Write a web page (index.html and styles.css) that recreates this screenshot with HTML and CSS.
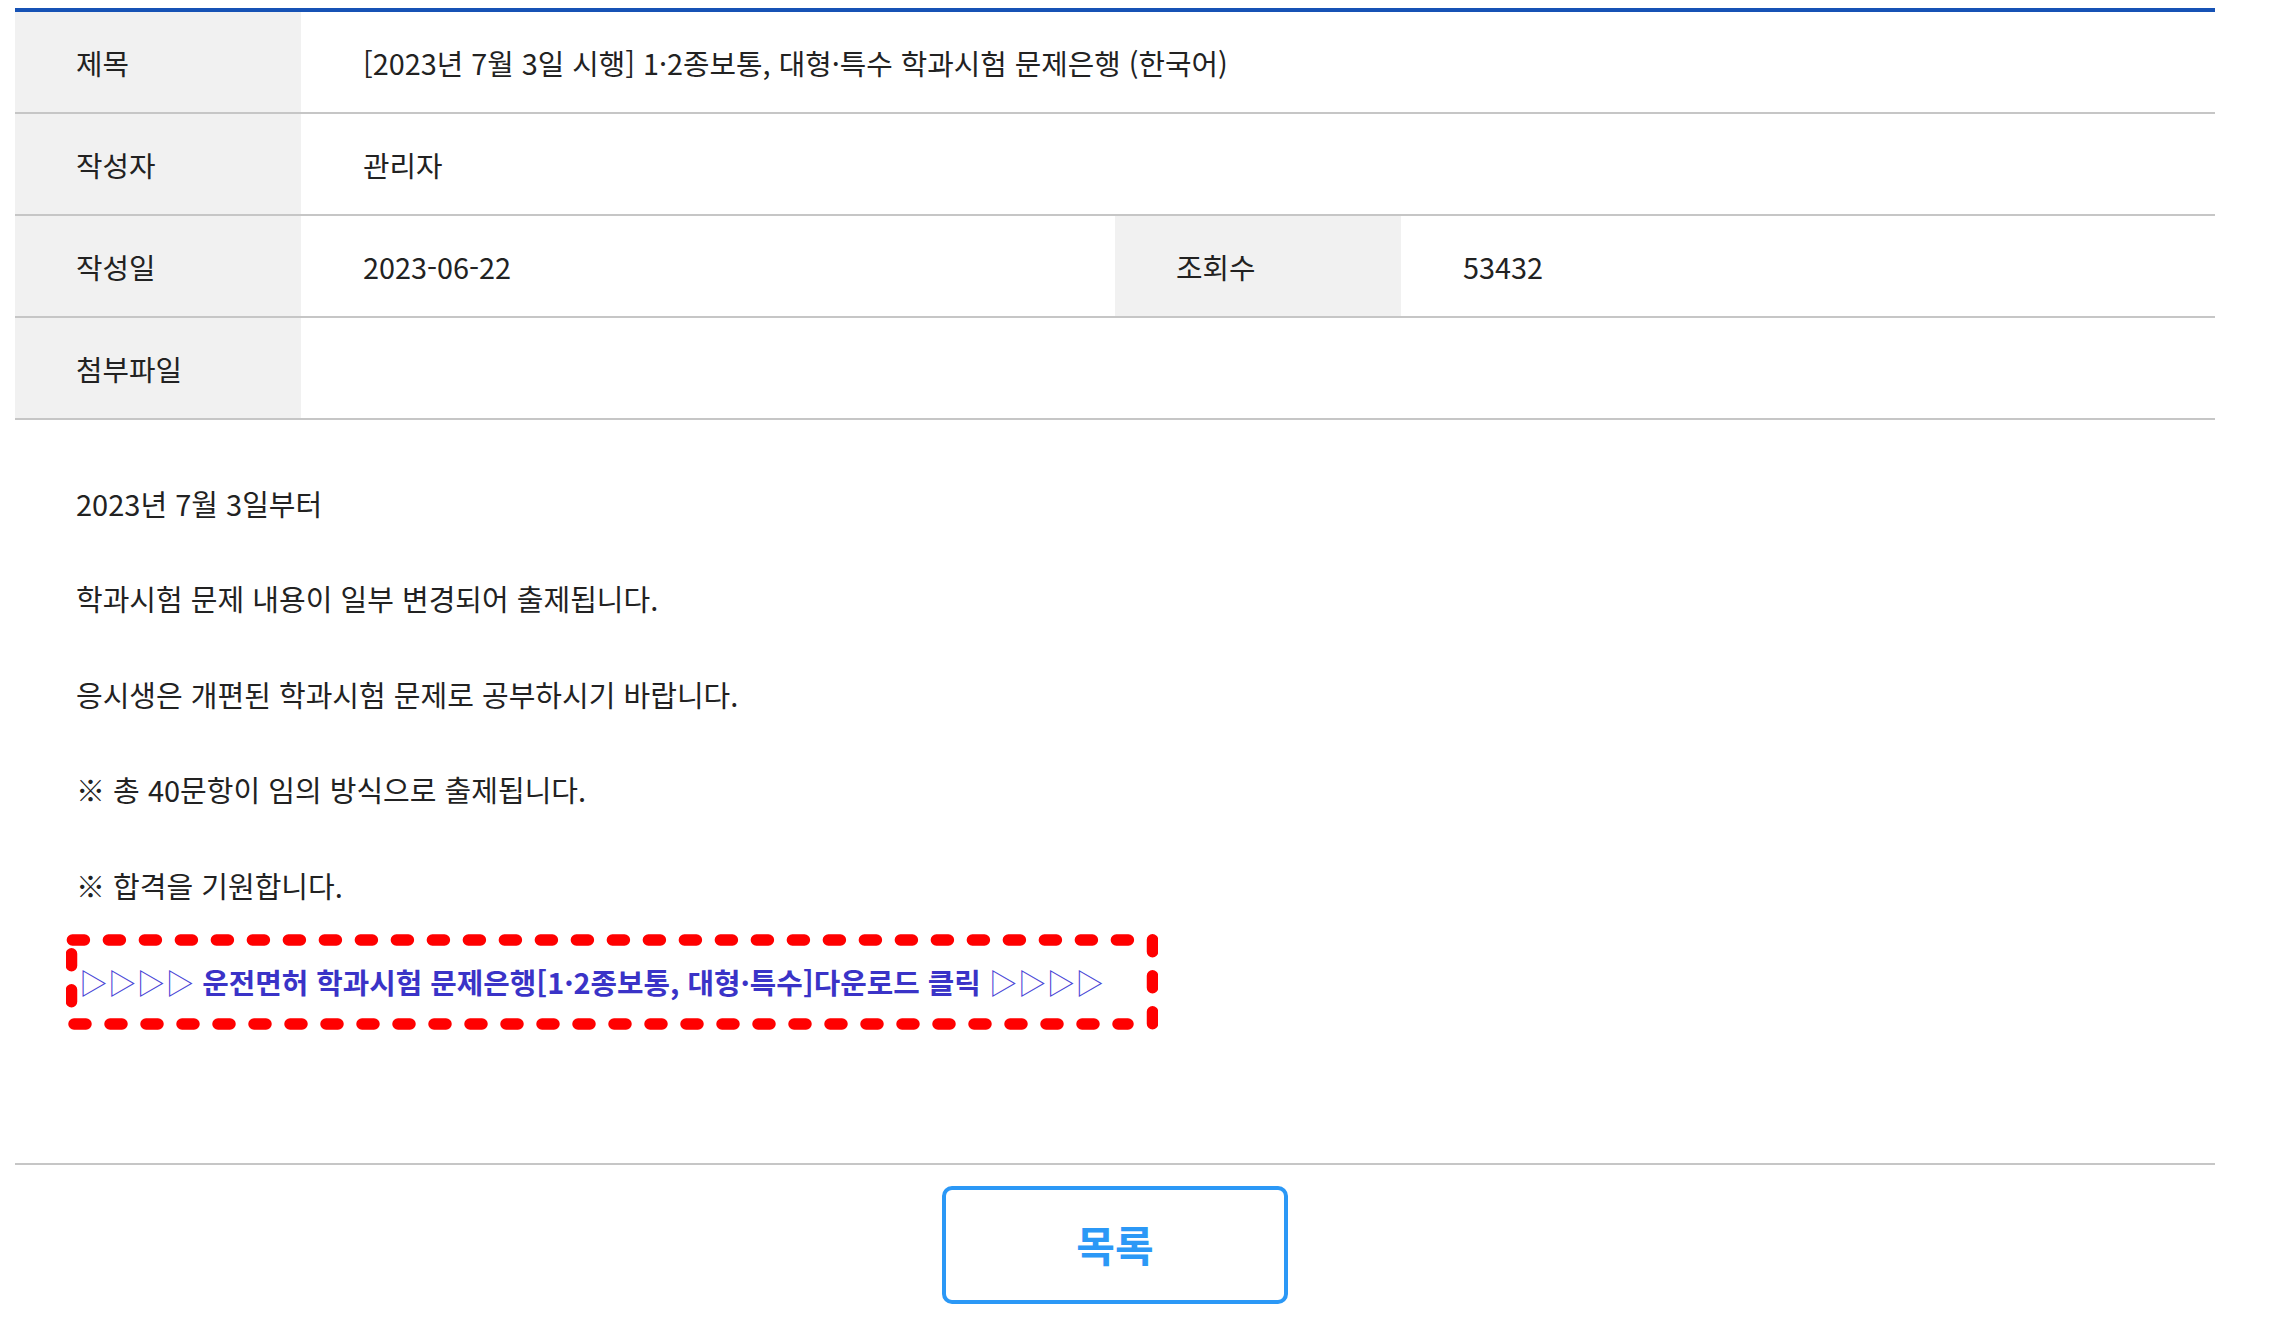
FILE: index.html
```html
<!DOCTYPE html>
<html lang="ko">
<head>
    <meta charset="utf-8">
    <title>공지사항</title>
    <link rel="stylesheet" href="styles.css">
</head>

<body>

    <div class="container">

        <div class="view-info">
            <div class="row">
                <div class="th">제목</div>
                <div class="td wide">[2023년 7월 3일 시행] 1·2종보통, 대형·특수 학과시험 문제은행 (한국어)</div>
            </div>
            <div class="row">
                <div class="th">작성자</div>
                <div class="td wide">관리자</div>
            </div>
            <div class="row">
                <div class="th">작성일</div>
                <div class="td">2023-06-22</div>
                <div class="th">조회수</div>
                <div class="td">53432</div>
            </div>
            <div class="row">
                <div class="th">첨부파일</div>
                <div class="td wide"></div>
            </div>
        </div>

        <div class="view-content">
            <p>2023년 7월 3일부터</p>
            <p>학과시험 문제 내용이 일부 변경되어 출제됩니다.</p>
            <p>응시생은 개편된 학과시험 문제로 공부하시기 바랍니다.</p>
            <p>※ 총 40문항이 임의 방식으로 출제됩니다.</p>
            <p class="last">※ 합격을 기원합니다.</p>

            <div class="down-box">
                <a href="#"><span class="arrow">▷▷▷▷</span> 운전면허 학과시험 문제은행[1·2종보통, 대형·특수]다운로드 클릭 <span class="arrow">▷▷▷▷</span></a>
                <!-- red dashed frame -->
                <svg class="frame" width="1092" height="96" viewBox="0 0 1092 96">
                    <g stroke="#ff0000" stroke-width="11.5" stroke-linecap="round" stroke-dasharray="12 24" fill="none">
                        <line x1="6.4" y1="6" x2="1080" y2="6"/>
                        <line x1="1086.5" y1="5.75" x2="1086.5" y2="96"/>
                        <line x1="5.5" y1="19.75" x2="5.5" y2="80"/>
                        <line x1="8" y1="90" x2="1062" y2="90"/>
                    </g>
                </svg>
            </div>
        </div>

        <div class="view-btn">
            <a class="btn-list" href="#">목록</a>
        </div>

    </div> <!-- /container -->
</body>
</html>
```

FILE: styles.css
```css
html {
	font-family: "Noto Sans CJK KR", "Noto Sans", sans-serif;
	-webkit-text-size-adjust: 100%;
}
body {
	margin: 0;
	background-color: #fff;
	color: #222;
}
.container {
	width: 2200px;
	margin: 8px 0 0 15px;
}
.view-info {
	border-top: 4px solid #1652b5;
}
.view-info .row {
	display: grid;
	grid-template-columns: 286px 1fr 286px 1fr;
	height: 100px;
	border-bottom: 2px solid #c6c6c6;
	font-size: 28.8px;
}
.view-info .th {
	display: flex;
	align-items: center;
	padding-left: 61px;
	background-color: #f1f1f1;
}
.view-info .td {
	display: flex;
	align-items: center;
	padding-left: 62px;
}
.view-info .td.wide {
	grid-column: span 3;
}
.view-content {
	padding: 60px 61px 133px;
	font-size: 29px;
}
.view-content p {
	margin: 0 0 47.7px;
	line-height: 47.7px;
}
.view-content p.last {
	margin-bottom: 25px;
}
.down-box {
	position: relative;
	box-sizing: border-box;
	width: 1092px;
	height: 96px;
	margin-left: -10px;
	padding: 24px 0 0 13px;
	font-size: 28.8px;
	line-height: 47.7px;
	white-space: nowrap;
}
.down-box a {
	color: #3a33c7;
	font-weight: bold;
	text-decoration: none;
}
.down-box .arrow {
	font-weight: normal;
	color: #4b47d6;
}
.down-box .frame {
	position: absolute;
	top: 0;
	left: 0;
}
.view-btn {
	border-top: 2px solid #c6c6c6;
	padding-top: 21px;
	text-align: center;
}
.btn-list {
	display: inline-block;
	box-sizing: border-box;
	width: 346px;
	height: 118px;
	border: 4px solid #2b98f6;
	border-radius: 10px;
	color: #2b98f6;
	font-size: 42px;
	font-weight: bold;
	line-height: 108px;
	text-decoration: none;
}
```
